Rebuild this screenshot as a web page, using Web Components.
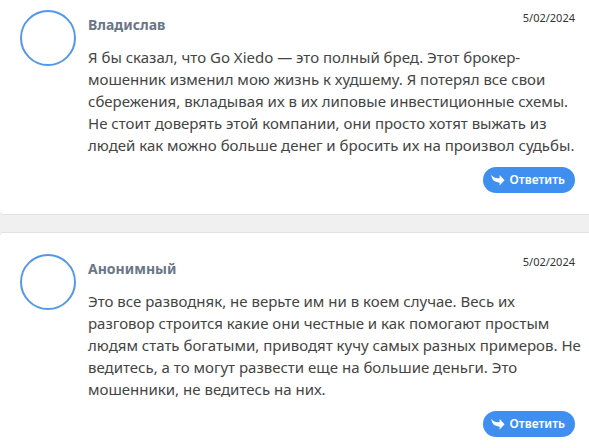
<!DOCTYPE html>
<html lang="ru">
<head>
<meta charset="utf-8">
<title>Комментарии</title>
<style>
body { margin: 0; background: #f0f0f0; font-family: "Noto Sans", "Open Sans", sans-serif; color: #444; }
</style>
</head>
<body>
<comment-list>
  <comment-card class="first">
    <span slot="name">Владислав</span>
    <time slot="date" datetime="2024-02-05">5/02/2024</time>
    <span slot="text">Я бы сказал, что Go Xiedo — это полный бред. Этот брокер-<br>мошенник изменил мою жизнь к худшему. Я потерял все свои<br>сбережения, вкладывая их в их липовые инвестиционные схемы.<br>Не стоит доверять этой компании, они просто хотят выжать из<br>людей как можно больше денег и бросить их на произвол судьбы.</span>
  </comment-card>
  <comment-card class="last">
    <span slot="name">Анонимный</span>
    <time slot="date" datetime="2024-02-05">5/02/2024</time>
    <span slot="text">Это все разводняк, не верьте им ни в коем случае. Весь их<br>разговор строится какие они честные и как помогают простым<br>людям стать богатыми, приводят кучу самых разных примеров. Не<br>ведитесь, а то могут развести еще на большие деньги. Это<br>мошенники, не ведитесь на них.</span>
  </comment-card>
</comment-list>

<template id="list-template">
  <style>
    :host { display: flex; flex-direction: column; gap: 17px; height: 100vh; overflow: hidden; }
    ::slotted(.first) { border-top: 0; border-top-left-radius: 0; --pad-top: 10px; }
    ::slotted(.last) { flex: 1 0 auto; }
  </style>
  <slot></slot>
</template>

<template id="card-template">
  <style>
    :host { display: block; flex: none; box-sizing: border-box; background: #fff; border: solid #e2e2e2; border-width: 1px 0; border-radius: 4px 0 0 4px; }
    article { display: grid; grid-template-columns: 56px minmax(0, 1fr); column-gap: 12px; padding: var(--pad-top, 21px) 14px 21px 20px; }
    header { display: flex; justify-content: space-between; height: 36px; }
    h3 { margin: 4px 0 0; font-size: 14px; line-height: 22px; font-weight: 700; color: #6b7686; }
    .date { font-size: 11px; line-height: 16px; color: #333; }
    p { margin: 0; font-size: 15px; line-height: 22px; white-space: nowrap; }
    footer { display: flex; justify-content: flex-end; margin-top: 11px; }
  </style>
  <article>
    <user-avatar></user-avatar>
    <div>
      <header>
        <h3><slot name="name"></slot></h3>
        <div class="date"><slot name="date"></slot></div>
      </header>
      <p><slot name="text"></slot></p>
      <footer><reply-button>Ответить</reply-button></footer>
    </div>
  </article>
</template>

<template id="avatar-template">
  <style>
    :host { display: block; box-sizing: border-box; width: 56px; height: 56px; border: 2px solid #5598ea; border-radius: 50%; background: #fff; }
  </style>
</template>

<template id="reply-template">
  <style>
    :host { display: block; }
    button { display: flex; align-items: center; gap: 5px; height: 26px; padding: 0 10px 0 8px; border: 0; border-radius: 13px; background: #3f8ff0; color: #fff; font: 600 12px/16px "Noto Sans", "Open Sans", sans-serif; cursor: pointer; }
    svg { display: block; width: 14px; height: 12px; }
  </style>
  <button type="button">
    <svg viewBox="0 0 14 12" aria-hidden="true"><path fill="#fff" d="M0.4 0.6C1.4 3 3.6 4.3 8.6 4.3V1L13.6 6.3L8.6 11.4V8.4C3.4 8.4 0.6 6 0.4 0.6Z"/></svg>
    <slot></slot>
  </button>
</template>

<script>
  const define = (name, templateId) => customElements.define(name, class extends HTMLElement {
    constructor() {
      super();
      this.attachShadow({ mode: "open" }).append(document.getElementById(templateId).content.cloneNode(true));
    }
  });
  define("user-avatar", "avatar-template");
  define("reply-button", "reply-template");
  define("comment-card", "card-template");
  define("comment-list", "list-template");
</script>
</body>
</html>
